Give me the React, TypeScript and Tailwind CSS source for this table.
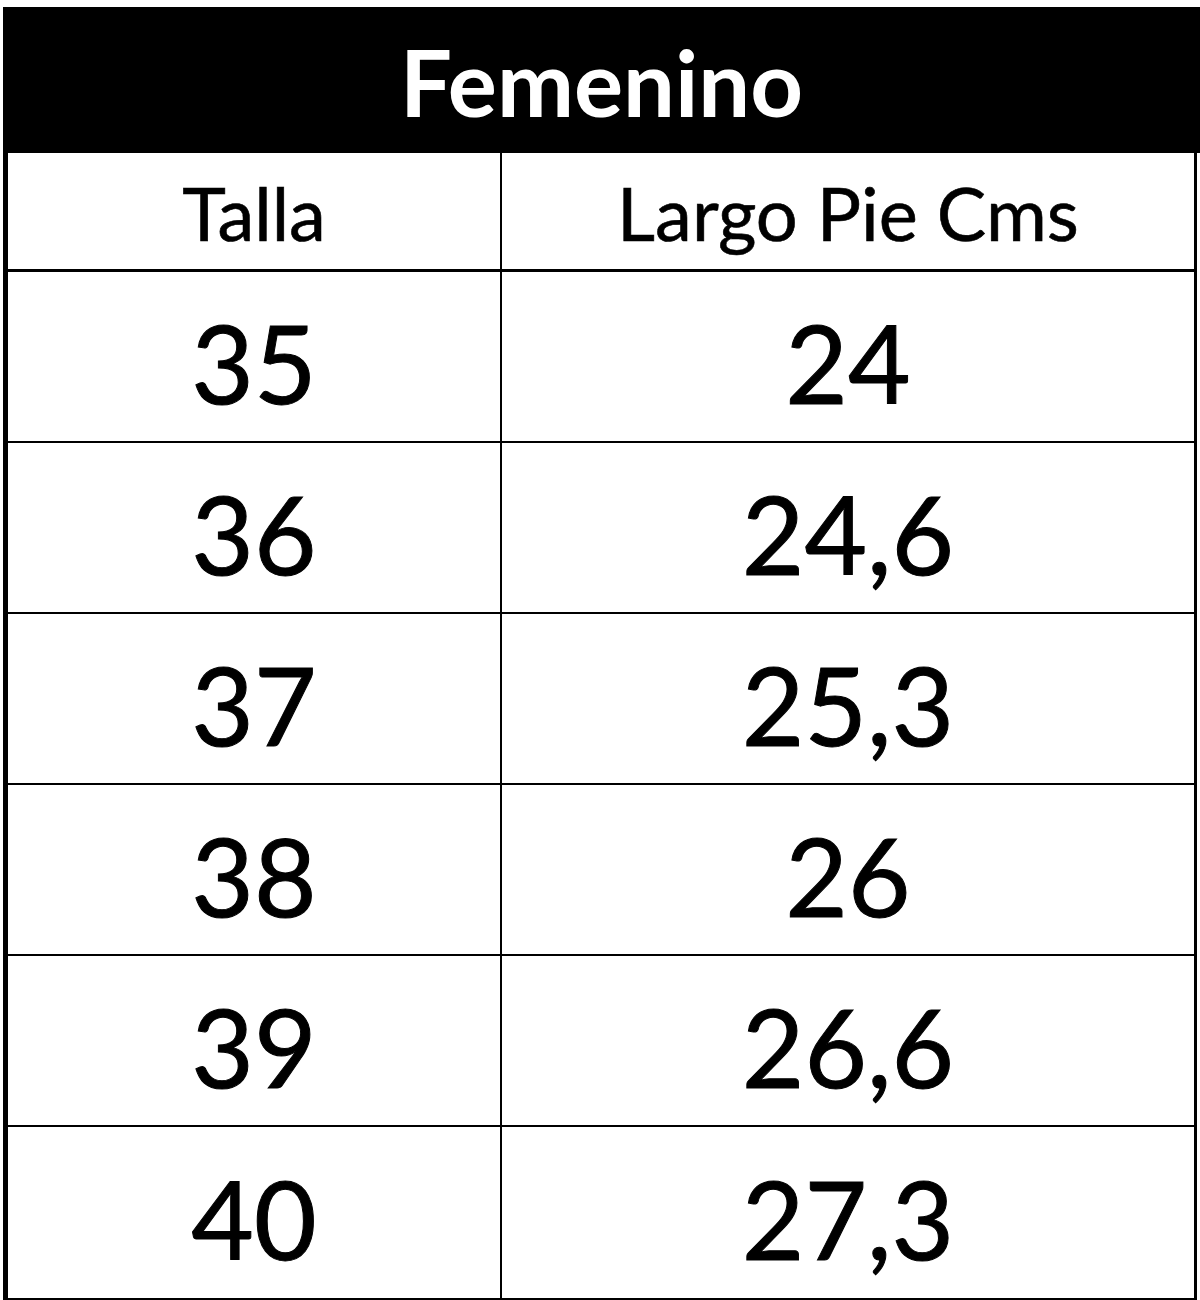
const rows = [
  ["35", "24"],
  ["36", "24,6"],
  ["37", "25,3"],
  ["38", "26"],
  ["39", "26,6"],
  ["40", "27,3"],
];

export default function App() {
  return (
    <div className="w-[1200px] h-[1300px] bg-white pt-[7px] pl-[3px] font-['Lato','Liberation_Sans',sans-serif] text-black">
      <div className="w-[1197px] h-[146px] bg-black flex items-center justify-center">
        <span className="text-[92px] font-bold text-white leading-none pt-[4px]">Femenino</span>
      </div>
      <div className="w-[1194px] border-l-[5px] border-r-[3px] border-b-[3px] border-black">
        <div className="flex h-[119px] border-b-[3px] border-black">
          <div className="w-[494px] border-r-[2px] border-black flex items-center justify-center text-[74px] leading-none pt-[4px] [-webkit-text-stroke:0.6px_black]">
            Talla
          </div>
          <div className="flex-1 flex items-center justify-center text-[74px] leading-none pt-[4px] [-webkit-text-stroke:0.6px_black]">
            Largo Pie Cms
          </div>
        </div>
        {rows.map(([talla, largo], i) => (
          <div
            key={talla}
            className={`flex h-[171px] ${i < rows.length - 1 ? "border-b-[2px] border-black" : ""}`}
          >
            <div className="w-[494px] border-r-[2px] border-black flex items-center justify-center text-[108px] leading-none pt-[10px] [-webkit-text-stroke:1px_black]">
              {talla}
            </div>
            <div className="flex-1 flex items-center justify-center text-[108px] leading-none pt-[10px] [-webkit-text-stroke:1px_black]">
              {largo}
            </div>
          </div>
        ))}
      </div>
    </div>
  );
}
